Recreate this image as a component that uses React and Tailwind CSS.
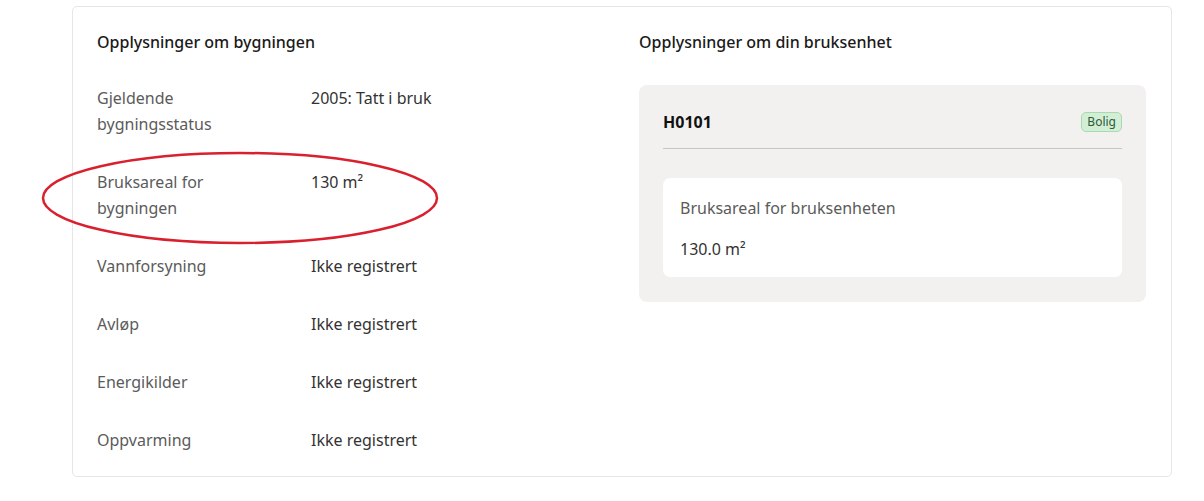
import React from "react";

const rows = [
  { label: ["Gjeldende", "bygningsstatus"], value: "2005: Tatt i bruk" },
  { label: ["Bruksareal for", "bygningen"], value: "130 m²" },
  { label: ["Vannforsyning"], value: "Ikke registrert" },
  { label: ["Avløp"], value: "Ikke registrert" },
  { label: ["Energikilder"], value: "Ikke registrert" },
  { label: ["Oppvarming"], value: "Ikke registrert" },
];

export default function App() {
  return (
    <div className="relative min-h-[501px] bg-white pt-[6px] pl-[72px] font-['Noto_Sans','Lato',sans-serif] text-[16px] leading-[26px]">
      <div className="w-[1100px] rounded-[5px] border border-[#e6e6e6] px-[24px] pt-[22px] pb-[23px]">
        <div className="grid grid-cols-[507px_507px] gap-[35px]">
          {/* bygning */}
          <div>
            <h2 className="mb-[30px] font-medium text-[#1a1a1a]">Opplysninger om bygningen</h2>
            <div className="flex flex-col gap-[32px]">
              {rows.map((r) => (
                <div key={r.value + r.label[0]} className="flex">
                  <div className="w-[214px] text-[#5b5b5b]">
                    {r.label.map((l) => (
                      <div key={l}>{l}</div>
                    ))}
                  </div>
                  <div className="text-[#333]">{r.value}</div>
                </div>
              ))}
            </div>
          </div>

          {/* bruksenhet */}
          <div>
            <h2 className="mb-[30px] font-medium text-[#1a1a1a]">Opplysninger om din bruksenhet</h2>
            <div className="rounded-[8px] bg-[#f3f1ef] px-[24px] pt-[24px] pb-[25px]">
              <div className="flex items-center justify-between border-b border-[#c6c6c6] pb-[13px]">
                <span className="font-bold text-[#111]">H0101</span>
                <span className="rounded-[5px] border border-[#a9d9b1] bg-[#d2efd6] px-[5px] text-[12px] leading-[18px] text-[#2e5a38]">
                  Bolig
                </span>
              </div>
              <div className="mt-[29px] rounded-[7px] bg-white px-[17px] pt-[17px] pb-[15px]">
                <div className="text-[#5b5b5b]">Bruksareal for bruksenheten</div>
                <div className="mt-[15px] text-[#333]">130.0 m²</div>
              </div>
            </div>
          </div>
        </div>
      </div>

      {/* red annotation ellipse */}
      <svg className="pointer-events-none absolute left-[40px] top-[150px]" width="402" height="98" viewBox="0 0 402 98">
        <ellipse cx="200" cy="48" rx="197" ry="45" fill="none" stroke="#d9202f" strokeWidth="2.5" />
      </svg>
    </div>
  );
}
